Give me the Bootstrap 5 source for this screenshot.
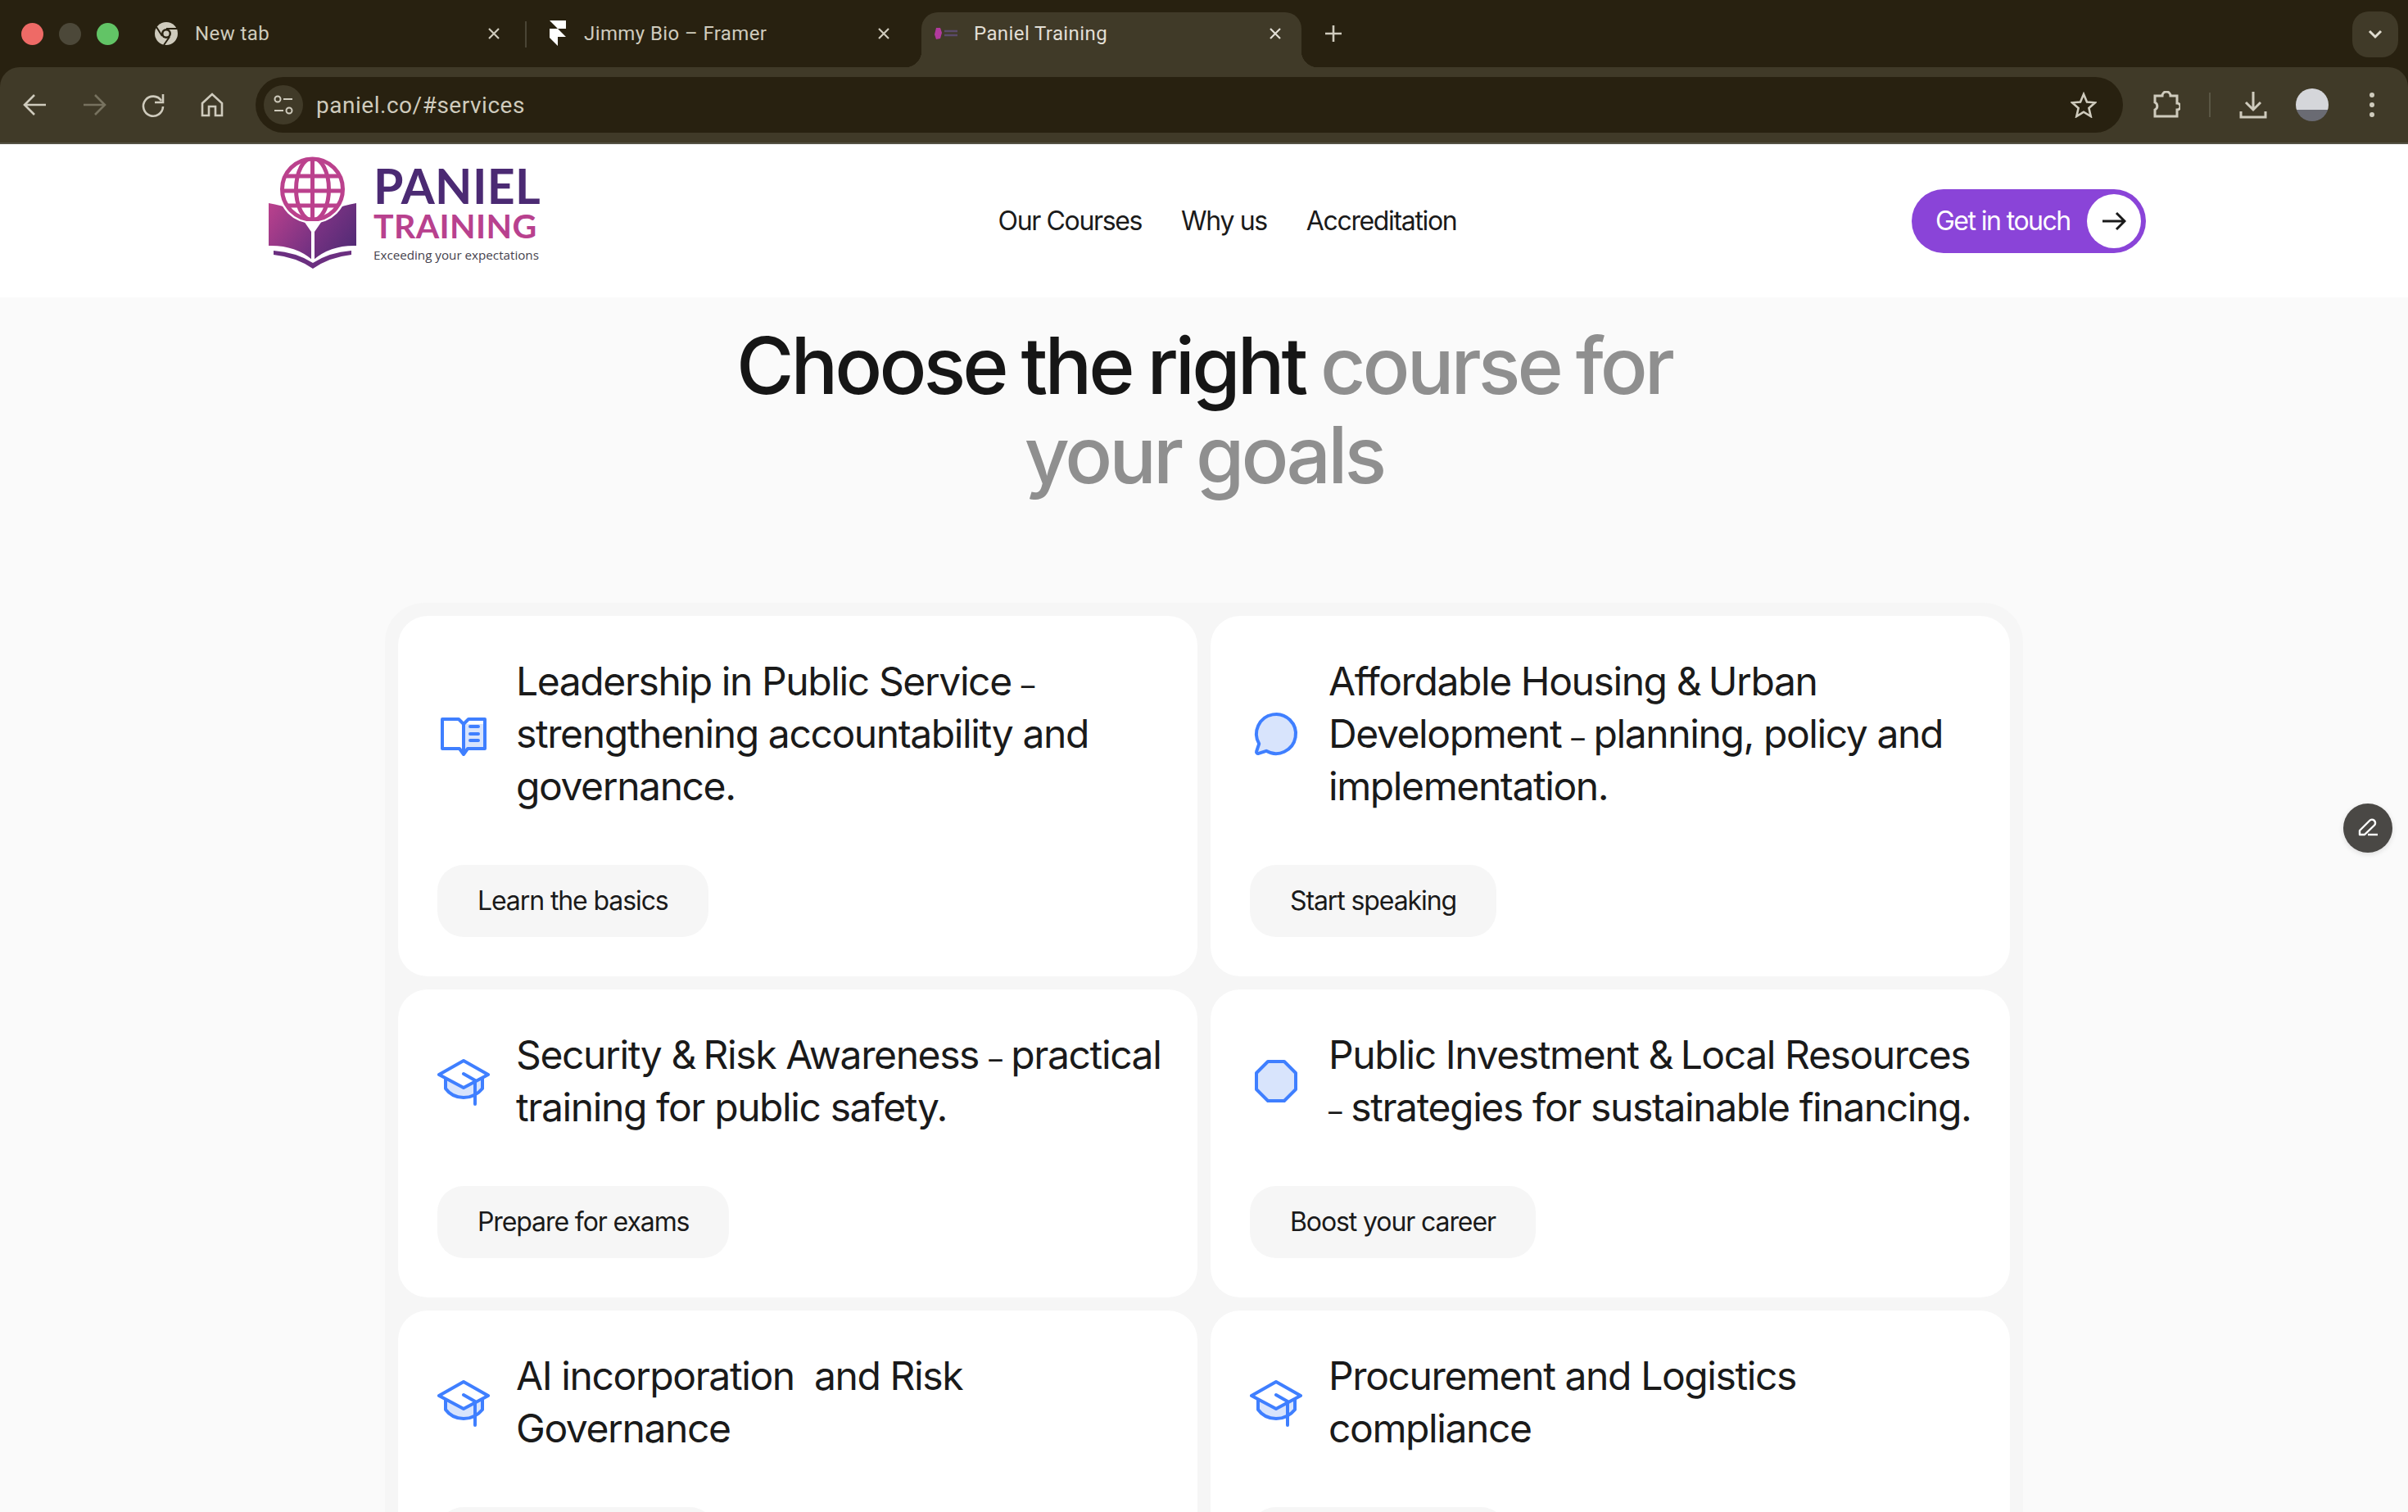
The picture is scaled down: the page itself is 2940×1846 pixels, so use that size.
<!DOCTYPE html>
<html lang="en"><head><meta charset="utf-8"><title>Paniel Training</title>
<link href="https://cdn.jsdelivr.net/npm/bootstrap@5.3.0/dist/css/bootstrap.min.css" rel="stylesheet">
<style>
html,body{margin:0;height:1846px;overflow:hidden;background:#fafafa;}
body{font-family:"Inter","Liberation Sans",sans-serif;color:#1a1a1a;}
.chrome{background:#282110;}
.tabstrip{height:82px;padding-left:26px;}
.light{width:27px;height:27px;border-radius:50%;margin-right:19px;}
.tabitem{height:67px;margin-top:15px;padding:0 0 15px 30px;color:#cfcbbd;font-size:24px;font-family:"Roboto","Liberation Sans",sans-serif;letter-spacing:.4px;position:relative;}
.tabone{width:483px;margin-left:13px;padding-right:30px;}
.tabtwo{width:468px;padding-left:26px;padding-right:24px;}
.tabitem.on{width:464px;background:#403a28;border-radius:20px 20px 0 0;margin-left:14px;padding-left:14px;padding-right:24px;color:#e2dfd6;}
.tabitem.on::before,.tabitem.on::after{content:"";position:absolute;bottom:0;width:20px;height:20px;}
.tabitem.on::before{left:-20px;background:radial-gradient(circle at 0 0,transparent 20px,#403a28 20.5px);}
.tabitem.on::after{right:-20px;background:radial-gradient(circle at 100% 0,transparent 20px,#403a28 20.5px);}
.tabtxt{margin-left:20px;flex:1;white-space:nowrap;}
.tabsep{width:2px;height:32px;background:#4a4535;margin-top:26px;flex:none;}
.plusbtn{height:82px;margin-left:28px;}
.chev{width:56px;height:56px;border-radius:20px;background:#403a28;margin:14px 12px 0 auto;}
.toolbar{height:94px;background:#403a28;border-radius:24px 24px 0 0;border-bottom:2px solid #555245;padding:0 0 0 24px;}
.tbtn{width:38px;height:38px;margin-right:34px;}
.addr{height:68px;background:#282110;border-radius:34px;width:2280px;margin-left:0;padding:0 32px 0 10px;color:#cfcbbd;font:28px "Roboto","Liberation Sans",sans-serif;letter-spacing:.52px;}
.info{width:48px;height:48px;border-radius:50%;background:#403a28;margin-right:16px;}
.extbtn{margin-left:36px;}
.vline{width:2px;height:30px;background:#5a5644;margin:0 35px;}
.avatar{margin-left:35px;}
.dots{margin-left:48px;}
.topbar{height:187px;background:#fff;padding:0 320px 0 328px;}
.logolink{gap:18px;margin-top:-16px;}
.logotxt{margin-top:-5px;}
.brand1{font:700 59px/56px "Lato","Liberation Sans",sans-serif;color:#4b2a73;letter-spacing:.3px;}
.brand2{font:700 41px/41px "Lato","Liberation Sans",sans-serif;color:#b8418e;letter-spacing:.35px;}
.brand3{font:500 15.2px/1 "Open Sans","Liberation Sans",sans-serif;color:#45424d;margin-top:8px;white-space:nowrap;}
.navlink{font-size:32px;color:#1a1a1a;text-decoration:none;letter-spacing:-1.35px;}
.navset{margin-left:3px;gap:48px;}
.cta{width:286px;height:78px;border-radius:39px;background:#8a44d8;padding:6px 6px 6px 29px;color:#fff;font-size:32px;letter-spacing:-1.55px;border:0;}
.ctadot{width:66px;height:66px;background:#fff;border-radius:50%;}
.headline{font-size:96px;line-height:109px;font-weight:500;letter-spacing:-3.9px;word-spacing:-3px;text-align:center;margin:29px 0 0;color:#161616;}
.headline span{color:#8f8f8f;}
.shell{width:2000px;margin:126px auto 0;padding:16px;background:#f6f6f6;border-radius:48px 48px 0 0;}
.coursebox{border-radius:36px;padding:48px;background:#fff;border:0;height:100%;}
.coursetxt{font-size:48px;line-height:64px;font-weight:400;letter-spacing:-1.4px;margin:0;color:#1a1a1a;white-space:nowrap;}
.shortdash{font-size:33px;line-height:0;}
.tightamp{letter-spacing:-4px;}
.ico{width:64px;height:64px;flex:none;}
.stepbtn{height:88px;border-radius:32px;background:#f6f6f6;padding:0 49px;font-size:32px;color:#1a1a1a;border:0;letter-spacing:-1.1px;margin-top:64px;}
.stepwide{width:340px;}
.stepnarrow{width:314px;}
.edit{position:absolute;left:2861px;top:981px;width:60px;height:60px;border-radius:50%;background:#4a4845;box-shadow:0 2px 6px rgba(0,0,0,.12);}
</style></head><body>

<div class="chrome">
<div class="tabstrip d-flex align-items-start">
  <div class="d-flex align-items-center" style="height:82px"><span class="light" style="background:#ee6a66"></span><span class="light" style="background:#4c4839"></span><span class="light" style="background:#62c466;margin-right:0"></span></div>
  <div class="tabitem tabone d-flex align-items-center">
    <svg width="30" height="30" viewBox="0 0 30 30"><circle cx="15" cy="15" r="14" fill="#cfcbbd"/><circle cx="15" cy="15" r="6" fill="#282110"/><circle cx="15" cy="15" r="3.5" fill="#cfcbbd"/><path d="M15 9H28M10 18L3 7M19 19L12 29" stroke="#282110" stroke-width="2"/></svg>
    <span class="tabtxt">New tab</span>
    <svg width="16" height="16" viewBox="0 0 16 16"><path d="M2 2L14 14M14 2L2 14" stroke="#cfcbbd" stroke-width="2.2"/></svg>
  </div>
  <div class="tabsep"></div>
  <div class="tabitem tabtwo d-flex align-items-center">
    <svg width="24" height="32" viewBox="0 0 24 32"><path d="M2 0H22V10H12ZM2 10H12L22 20H12V31L2 21Z" fill="#fff"/></svg>
    <span class="tabtxt">Jimmy Bio – Framer</span>
    <svg width="16" height="16" viewBox="0 0 16 16"><path d="M2 2L14 14M14 2L2 14" stroke="#cfcbbd" stroke-width="2.2"/></svg>
  </div>
  <div class="tabitem on d-flex align-items-center">
    <svg width="34" height="18" viewBox="0 0 34 18"><path d="M4 2H9L11 8L9 15L4 16L2 10Z" fill="#b23a9e"/><path d="M14 6H30M14 11H30" stroke="#5a4a6a" stroke-width="2.4"/></svg>
    <span class="tabtxt" style="margin-left:16px">Paniel Training</span>
    <svg width="16" height="16" viewBox="0 0 16 16"><path d="M2 2L14 14M14 2L2 14" stroke="#e2dfd6" stroke-width="2.2"/></svg>
  </div>
  <div class="plusbtn d-flex align-items-center"><svg width="22" height="22" viewBox="0 0 22 22"><path d="M11 1V21M1 11H21" stroke="#cfcbbd" stroke-width="2.6"/></svg></div>
  <div class="chev d-flex align-items-center justify-content-center"><svg width="18" height="12" viewBox="0 0 18 12"><path d="M2 2L9 9L16 2" fill="none" stroke="#e0ddd0" stroke-width="3"/></svg></div>
</div>

<div class="toolbar d-flex align-items-center">
  <svg class="tbtn" viewBox="0 0 38 38"><path d="M32 19H7M18 7L6 19L18 31" fill="none" stroke="#cfcbbd" stroke-width="2.6"/></svg>
  <svg class="tbtn" viewBox="0 0 38 38"><path d="M6 19H31M20 7L32 19L20 31" fill="none" stroke="#77725f" stroke-width="2.6"/></svg>
  <svg class="tbtn" viewBox="0 0 38 38"><path d="M29 14A12 12 0 1 0 31 21" fill="none" stroke="#cfcbbd" stroke-width="2.6"/><path d="M31 6V16H21" fill="none" stroke="#cfcbbd" stroke-width="2.6"/></svg>
  <svg class="tbtn" viewBox="0 0 38 38"><path d="M7 17L19 6L31 17V32H23V21H15V32H7Z" fill="none" stroke="#cfcbbd" stroke-width="2.6"/></svg>
  <div class="addr d-flex align-items-center">
    <div class="info d-flex align-items-center justify-content-center"><svg width="26" height="26" viewBox="0 0 26 26"><circle cx="6" cy="6" r="3.5" fill="none" stroke="#cfcbbd" stroke-width="2"/><path d="M13 6H24M2 20H13" stroke="#cfcbbd" stroke-width="2"/><circle cx="20" cy="20" r="3.5" fill="none" stroke="#cfcbbd" stroke-width="2"/></svg></div>
    <span>paniel.co/#services</span>
    <svg class="ms-auto" width="32" height="32" viewBox="0 0 32 32"><path d="M16 3L20 12.5L30 13.3L22.4 20L24.7 30L16 24.7L7.3 30L9.6 20L2 13.3L12 12.5Z" fill="none" stroke="#cfcbbd" stroke-width="2.6"/></svg>
  </div>
  <svg class="extbtn" width="34" height="34" viewBox="0 0 34 34"><path d="M3 6H12A5 5 0 0 1 22 6H30V15A4 4 0 0 1 30 23V31H3V23A5 5 0 0 0 3 14Z" fill="none" stroke="#cfcbbd" stroke-width="3"/></svg>
  <div class="vline"></div>
  <svg width="34" height="36" viewBox="0 0 34 36"><path d="M17 2V24M8 15L17 24L26 15M2 26V33H32V26" fill="none" stroke="#cfcbbd" stroke-width="3"/></svg>
  <svg class="avatar" width="40" height="40" viewBox="0 0 40 40"><defs><clipPath id="av"><circle cx="20" cy="20" r="20"/></clipPath></defs><g clip-path="url(#av)"><rect width="40" height="26" fill="#d5d6da"/><rect y="26" width="40" height="14" fill="#6a6b73"/></g></svg>
  <svg class="dots" width="10" height="34" viewBox="0 0 10 34"><circle cx="5" cy="5" r="3" fill="#cfcbbd"/><circle cx="5" cy="17" r="3" fill="#cfcbbd"/><circle cx="5" cy="29" r="3" fill="#cfcbbd"/></svg>
</div>
</div>

<nav class="topbar d-flex align-items-center justify-content-between">
  <a class="logolink d-flex align-items-center text-decoration-none" href="#">
    <svg width="110" height="142" viewBox="28 20 110 142">
      <defs>
        <linearGradient id="pg" x1="0" y1="0" x2="1" y2="1"><stop offset="0" stop-color="#bb418d"/><stop offset="1" stop-color="#6b2f80"/></linearGradient>
        <linearGradient id="pg2" x1="0" y1="0" x2="1" y2="1"><stop offset="0" stop-color="#8a3588"/><stop offset="1" stop-color="#4b2a73"/></linearGradient>
        <clipPath id="gc"><circle cx="81.5" cy="60" r="38"/></clipPath>
      </defs>
      <path d="M28 77Q60 82 81 100V146Q60 128 28 129Z" fill="url(#pg)"/>
      <path d="M135 77Q104 82 83 100V146Q104 128 135 129Z" fill="url(#pg2)"/>
      <path d="M34 135Q62 137 82 150Q102 137 129 135V140Q102 143 82 157Q62 143 34 140Z" fill="#6b2f80"/>
      <circle cx="81.5" cy="60" r="42" fill="#fff"/>
      <g clip-path="url(#gc)" fill="none" stroke="#bb418d" stroke-width="5"><path d="M43 44H120M43 62H120M43 80H120M81.5 22V98"/><ellipse cx="81.5" cy="60" rx="20" ry="38"/></g>
      <circle cx="81.5" cy="60" r="37" fill="none" stroke="#bb418d" stroke-width="5"/>
      <path d="M71 99H93L84 112V148H80V112Z" fill="#fff"/>
    </svg>
    <div class="logotxt"><div class="brand1">PANIEL</div><div class="brand2">TRAINING</div><div class="brand3">Exceeding your expectations</div></div>
  </a>
  <div class="d-flex navset"><a class="navlink" href="#">Our Courses</a><a class="navlink" href="#">Why us</a><a class="navlink" href="#">Accreditation</a></div>
  <button class="cta d-flex align-items-center justify-content-between" type="button">Get in touch<span class="ctadot d-flex align-items-center justify-content-center"><svg width="30" height="24" viewBox="0 0 30 24"><path d="M1 12H28M18 2L28 12L18 22" fill="none" stroke="#1a1a1a" stroke-width="3"/></svg></span></button>
</nav>

<h1 class="headline">Choose the right <span>course for<br>your goals</span></h1>

<section class="shell">
  <div class="row g-3">
    <div class="col-6"><div class="card coursebox">
      <div class="d-flex align-items-center"><svg class="ico" viewBox="0 0 64 64"><path d="M32 20H58V50H36L32 54Z" fill="#d8e4fc"/><path d="M6 14H26L32 20L38 14H58V50H37L32 57L27 50H6ZM32 20V55M40 23H50M40 32H50M40 40H50" fill="none" stroke="#3f7fff" stroke-width="4" stroke-linejoin="round" stroke-linecap="round"/></svg>
      <p class="coursetxt ms-4 ps-2">Leadership in Public Service <span class="shortdash">–</span><br>strengthening accountability and<br>governance.</p></div>
      <div><button class="btn stepbtn" type="button">Learn the basics</button></div>
    </div></div>
    <div class="col-6"><div class="card coursebox">
      <div class="d-flex align-items-center"><svg class="ico" viewBox="0 0 256 256"><path d="M79.93 211.11a96 96 0 1 0-35-35h0L32.42 213.46a8 8 0 0 0 10.12 10.12l37.39-12.47Z" fill="#d8e4fc" stroke="#3f7fff" stroke-width="16" stroke-linejoin="round"/></svg>
      <p class="coursetxt ms-4 ps-2">Affordable Housing <span class="tightamp">&amp;</span> Urban<br>Development <span class="shortdash">–</span> planning, policy and<br>implementation.</p></div>
      <div><button class="btn stepbtn" type="button">Start speaking</button></div>
    </div></div>
    <div class="col-6"><div class="card coursebox">
      <div class="d-flex align-items-center"><svg class="ico" viewBox="0 0 64 64"><path d="M10 30V41Q18 52 32 52Q46 52 55 41V30L32 40Z" fill="#d8e4fc"/><path d="M2 24L32 7L62 24L32 40ZM10 29V41Q18 52 32 52Q46 52 55 41V29M32 23L46 31V60" fill="none" stroke="#3f7fff" stroke-width="4" stroke-linejoin="round" stroke-linecap="round"/></svg>
      <p class="coursetxt ms-4 ps-2">Security <span class="tightamp">&amp;</span> Risk Awareness <span class="shortdash">–</span> practical<br>training for public safety.</p></div>
      <div><button class="btn stepbtn" type="button">Prepare for exams</button></div>
    </div></div>
    <div class="col-6"><div class="card coursebox">
      <div class="d-flex align-items-center"><svg class="ico" viewBox="0 0 64 64"><path d="M22 8H42L56 22V42L42 56H22L8 42V22Z" fill="#d8e4fc" stroke="#3f7fff" stroke-width="4" stroke-linejoin="round"/></svg>
      <p class="coursetxt ms-4 ps-2">Public Investment <span class="tightamp">&amp;</span> Local Resources<br><span class="shortdash">–</span> strategies for sustainable financing.</p></div>
      <div><button class="btn stepbtn" type="button">Boost your career</button></div>
    </div></div>
    <div class="col-6"><div class="card coursebox">
      <div class="d-flex align-items-center"><svg class="ico" viewBox="0 0 64 64"><path d="M10 30V41Q18 52 32 52Q46 52 55 41V30L32 40Z" fill="#d8e4fc"/><path d="M2 24L32 7L62 24L32 40ZM10 29V41Q18 52 32 52Q46 52 55 41V29M32 23L46 31V60" fill="none" stroke="#3f7fff" stroke-width="4" stroke-linejoin="round" stroke-linecap="round"/></svg>
      <p class="coursetxt ms-4 ps-2">AI incorporation&nbsp; and Risk<br>Governance</p></div>
      <div><button class="btn stepbtn stepwide" type="button" aria-label="Course action"></button></div>
    </div></div>
    <div class="col-6"><div class="card coursebox">
      <div class="d-flex align-items-center"><svg class="ico" viewBox="0 0 64 64"><path d="M10 30V41Q18 52 32 52Q46 52 55 41V30L32 40Z" fill="#d8e4fc"/><path d="M2 24L32 7L62 24L32 40ZM10 29V41Q18 52 32 52Q46 52 55 41V29M32 23L46 31V60" fill="none" stroke="#3f7fff" stroke-width="4" stroke-linejoin="round" stroke-linecap="round"/></svg>
      <p class="coursetxt ms-4 ps-2">Procurement and Logistics<br>compliance</p></div>
      <div><button class="btn stepbtn stepnarrow" type="button" aria-label="Course action"></button></div>
    </div></div>
  </div>
</section>

<button class="edit btn d-flex align-items-center justify-content-center p-0" type="button" aria-label="Edit"><svg width="26" height="26" viewBox="0 0 26 26"><path d="M3 21V16L15 4A3.5 3.5 0 0 1 21 9.5L9 21Z" fill="none" stroke="#fff" stroke-width="2.4" stroke-linejoin="round"/><path d="M13 21H25" stroke="#fff" stroke-width="2.4"/></svg></button>

<script src="https://cdn.jsdelivr.net/npm/bootstrap@5.3.0/dist/js/bootstrap.bundle.min.js"></script>
</body></html>
